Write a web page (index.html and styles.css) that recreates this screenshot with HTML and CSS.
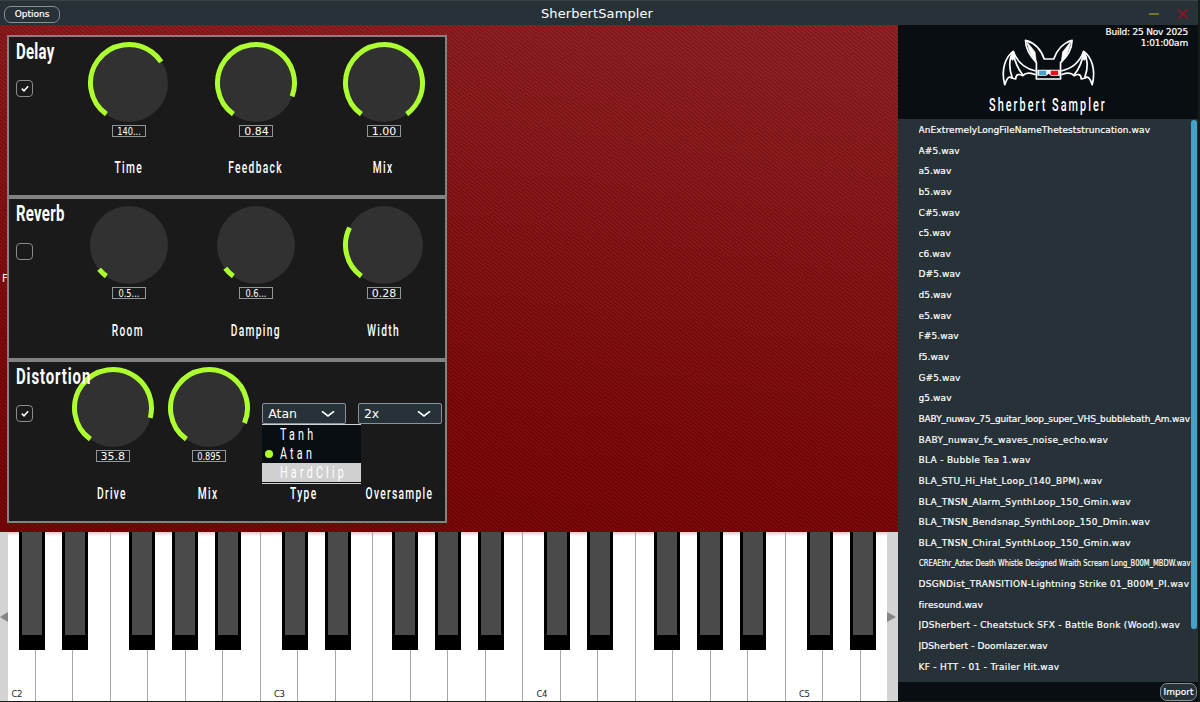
FILE: index.html
```html
<!DOCTYPE html>
<html lang="en">

<head>
    <meta charset="UTF-8">
    <meta name="viewport" content="width=device-width, initial-scale=1.0">
    <title>SherbertSampler</title>
    <link rel="stylesheet" href="styles.css">
</head>

<body>
    <div class="window">
        <header class="titlebar">
            <button class="btn options">Options</button>
            <h1>SherbertSampler</h1>
            <svg class="window-buttons" width="42" height="14" viewBox="0 0 42 14">
                <path d="M1 7h10" stroke="#a39023" stroke-width="1.4"/>
                <path d="M30 2l10 10M40 2l-10 10" stroke="#a80f20" stroke-width="1.4"/>
            </svg>
        </header>
        <div class="content">
            <main>
                <div class="stage">
                    <span class="hidden-label">F</span>
                    <div class="effects">
                        <section class="effect delay">
                            <div class="effect-head">
                                <h2>Delay</h2>
                                <span class="check on"><svg width="8" height="7" viewBox="0 0 8 7"><path d="M.8 3.6l2.2 2.2L7.2 1.2"/></svg></span>
                            </div>
                            <div class="control">
                                <svg class="knob" viewBox="-42 -42 84 84"><circle class="disc" r="39"/><circle class="arc" r="38.5" pathLength="360" stroke-dasharray="200.7 360"/></svg>
                                <span class="value"><i>140...</i></span>
                                <label>Time</label>
                            </div>
                            <div class="control">
                                <svg class="knob" viewBox="-42 -42 84 84"><circle class="disc" r="39"/><circle class="arc" r="38.5" pathLength="360" stroke-dasharray="254.3 360"/></svg>
                                <span class="value">0.84</span>
                                <label>Feedback</label>
                            </div>
                            <div class="control">
                                <svg class="knob" viewBox="-42 -42 84 84"><circle class="disc" r="39"/><circle class="arc" r="38.5" pathLength="360" stroke-dasharray="288 360"/></svg>
                                <span class="value">1.00</span>
                                <label>Mix</label>
                            </div>
                        </section>
                        <section class="effect reverb">
                            <div class="effect-head">
                                <h2>Reverb</h2>
                                <span class="check"></span>
                            </div>
                            <div class="control">
                                <svg class="knob" viewBox="-42 -42 84 84"><circle class="disc" r="39"/><circle class="arc" r="38.5" pathLength="360" stroke-dasharray="15 360"/></svg>
                                <span class="value"><i>0.5...</i></span>
                                <label>Room</label>
                            </div>
                            <div class="control">
                                <svg class="knob" viewBox="-42 -42 84 84"><circle class="disc" r="39"/><circle class="arc" r="38.5" pathLength="360" stroke-dasharray="17 360"/></svg>
                                <span class="value"><i>0.6...</i></span>
                                <label>Damping</label>
                            </div>
                            <div class="control">
                                <svg class="knob" viewBox="-42 -42 84 84"><circle class="disc" r="39"/><circle class="arc" r="38.5" pathLength="360" stroke-dasharray="80.6 360"/></svg>
                                <span class="value">0.28</span>
                                <label>Width</label>
                            </div>
                        </section>
                        <section class="effect distortion">
                            <div class="effect-head">
                                <h2>Distortion</h2>
                                <span class="check on"><svg width="8" height="7" viewBox="0 0 8 7"><path d="M.8 3.6l2.2 2.2L7.2 1.2"/></svg></span>
                            </div>
                            <div class="control">
                                <svg class="knob" viewBox="-42 -42 84 84"><circle class="disc" r="39"/><circle class="arc" r="38.5" pathLength="360" stroke-dasharray="249 360"/></svg>
                                <span class="value">35.8</span>
                                <label>Drive</label>
                            </div>
                            <div class="control">
                                <svg class="knob" viewBox="-42 -42 84 84"><circle class="disc" r="39"/><circle class="arc" r="38.5" pathLength="360" stroke-dasharray="257 360"/></svg>
                                <span class="value"><i>0.895</i></span>
                                <label>Mix</label>
                            </div>
                            <div class="control">
                                <div class="combo">
                                    <span>Atan</span>
                                    <svg width="14" height="8" viewBox="0 0 14 8"><path d="M1 1.3l6 4.7 6-4.7"/></svg>
                                    <ul class="menu">
                                        <li><span>Tanh</span></li>
                                        <li class="selected"><span>Atan</span></li>
                                        <li class="hover"><span>HardClip</span></li>
                                    </ul>
                                </div>
                                <label>Type</label>
                            </div>
                            <div class="control">
                                <div class="combo">
                                    <span>2x</span>
                                    <svg width="14" height="8" viewBox="0 0 14 8"><path d="M1 1.3l6 4.7 6-4.7"/></svg>
                                </div>
                                <label>Oversample</label>
                            </div>
                        </section>
                    </div>
                </div>
                <div class="keyboard">
                    <div class="scroll left"><svg width="8" height="10" viewBox="0 0 8 10"><path d="M8 0v10L0 5z"/></svg></div>
                    <div class="keys" id="keys"></div>
                    <div class="scroll right"><svg width="9" height="10" viewBox="0 0 9 10"><path d="M0 0v10l9-5z"/></svg></div>
                </div>
            </main>
            <aside>
                <div class="brand">
                    <p class="build">Build: 25 Nov 2025<br>1:01:00am</p>
                    <svg class="bat" width="102" height="65" viewBox="0 0 300 195" preserveAspectRatio="none">
                        <g fill="none" stroke="#fff" stroke-width="5" stroke-linejoin="round">
                            <path d="M110 147V98C91 78 78 54 78 31C104 38 124 60 133 87H161C170 60 190 38 215 31C214 56 202 80 181 98V147Z"/>
                            <path d="M82 35C88 65 98 82 110 98L106 66Z" fill="#fff" stroke-width="2"/>
                            <path d="M211 35C205 65 195 82 183 98L187 66Z" fill="#fff" stroke-width="2"/>
                            <path d="M108 123C76 116 54 98 42 64C19 80 5 120 17 164C22 148 29 136 37 144L49 147C50 130 60 132 70 137C81 125 95 130 108 134"/>
                            <path d="M42 64C29 87 29 115 39 143M42 64C45 91 55 117 72 137"/>
                            <path d="M42 64L32 84L40 92L48 84Z" fill="#fff" stroke="none"/>
                            <path d="M183 123C215 116 237 98 249 64C272 80 286 120 274 164C269 148 262 136 254 144L242 147C241 130 231 132 221 137C210 125 196 130 183 134"/>
                            <path d="M249 64C262 87 262 115 252 143M249 64C246 91 236 117 219 137"/>
                            <path d="M249 64L259 84L251 92L243 84Z" fill="#fff" stroke="none"/>
                        </g>
                        <path d="M113 119H179V137H153L146 131L139 137H113Z" fill="#fff"/>
                        <path d="M118 122H139V135H118Z" fill="#43a5cf"/>
                        <path d="M152 122H174V135H152Z" fill="#d9141d"/>
                    </svg>
                    <p class="brand-name">Sherbert Sampler</p>
                </div>
                <div class="browser">
                    <ul class="files">
                        <li>AnExtremelyLongFileNameTheteststruncation.wav</li>
                        <li>A#5.wav</li>
                        <li>a5.wav</li>
                        <li>b5.wav</li>
                        <li>C#5.wav</li>
                        <li>c5.wav</li>
                        <li>c6.wav</li>
                        <li>D#5.wav</li>
                        <li>d5.wav</li>
                        <li>e5.wav</li>
                        <li>F#5.wav</li>
                        <li>f5.wav</li>
                        <li>G#5.wav</li>
                        <li>g5.wav</li>
                        <li class="fitted">BABY_nuwav_75_guitar_loop_super_VHS_bubblebath_Am.wav</li>
                        <li class="wide">BABY_nuwav_fx_waves_noise_echo.wav</li>
                        <li class="wide">BLA - Bubble Tea 1.wav</li>
                        <li class="wide">BLA_STU_Hi_Hat_Loop_(140_BPM).wav</li>
                        <li class="wide">BLA_TNSN_Alarm_SynthLoop_150_Gmin.wav</li>
                        <li class="wide">BLA_TNSN_Bendsnap_SynthLoop_150_Dmin.wav</li>
                        <li class="wide">BLA_TNSN_Chiral_SynthLoop_150_Gmin.wav</li>
                        <li class="squeezed">CREAEthr_Aztec Death Whistle Designed Wraith Scream Long_B00M_MBDW.wav</li>
                        <li class="wide">DSGNDist_TRANSITION-Lightning Strike 01_B00M_PI.wav</li>
                        <li>firesound.wav</li>
                        <li class="wide">JDSherbert - Cheatstuck SFX - Battle Bonk (Wood).wav</li>
                        <li>JDSherbert - Doomlazer.wav</li>
                        <li class="wide">KF - HTT - 01 - Trailer Hit.wav</li>
                    </ul>
                    <div class="scrollbar"></div>
                </div>
                <footer>
                    <button class="btn import">Import</button>
                </footer>
            </aside>
        </div>
    </div>
    <script>
        // white keys; the ones with a sharp carry the black key
        var notes = ['C', 'D', 'E', 'F', 'G', 'A', 'B'];
        var sharps = ['C', 'D', 'F', 'G', 'A'];
        var keys = document.getElementById('keys');

        for (var i = 0; i < 24; i++)
        {
            var note = notes[i % 7];
            var key = document.createElement('div');
            key.className = 'key';
            if (note === 'C')
            {
                key.innerHTML = '<span>C' + (2 + Math.floor(i / 7)) + '</span>';
            }
            if (sharps.includes(note))
            {
                var black = document.createElement('div');
                black.className = 'black ' + note.toLowerCase() + '-sharp';
                key.appendChild(black);
            }
            keys.appendChild(key);
        }
    </script>
</body>
</html>
```
FILE: styles.css
```css
* {
    box-sizing: border-box;
}

body {
    font-family: "DejaVu Sans", Verdana, sans-serif;
    margin: 0;
    background-color: #171b16;
    color: #fff;
    overflow: hidden;
}

h1, h2, p, ul {
    margin: 0;
    padding: 0;
    font-weight: normal;
}

ul {
    list-style: none;
}

.window {
    width: 1198px;
    height: 701px;
    display: flex;
    flex-direction: column;
}

.titlebar {
    height: 25px;
    flex: none;
    display: grid;
    grid-template-columns: 1fr auto 1fr;
    align-items: center;
    padding: 2px 8px 0 4px;
    background-color: #263238;
    border-top: 1px solid #3b4243;
}

.titlebar h1 {
    font-size: 13px;
    line-height: 20px;
    letter-spacing: 0.1px;
}

.btn {
    font-family: inherit;
    font-size: 9px;
    padding: 0;
    color: #fff;
    background-color: #263238;
    border: 1px solid #859095;
    border-radius: 7px;
    -webkit-text-stroke: 0.2px #fff;
}

.options {
    width: 56px;
    height: 17px;
}

.window-buttons {
    justify-self: end;
    fill: none;
}

.content {
    flex: 1;
    display: flex;
    min-height: 0;
}

main {
    width: 898px;
    display: flex;
    flex-direction: column;
}

.stage {
    position: relative;
    height: 507px;
    padding: 10px 7px;
    background: repeating-linear-gradient(40deg, rgba(0, 0, 0, 0.15) 0, rgba(0, 0, 0, 0.15) 1.3px, rgba(255, 255, 255, 0.02) 1.7px, rgba(255, 255, 255, 0.02) 3px),
        linear-gradient(8deg, #780204 0%, #7f0709 30%, #8c1719 75%, #922022 100%);
}

.hidden-label {
    position: absolute;
    left: 2px;
    top: 248px;
    font-size: 10px;
}

.effects {
    position: relative;
    width: 440px;
}

.effect {
    display: flex;
    height: 163px;
    background-color: #1a1a1a;
    border: 2px solid #828282;
}

.effect.delay {
    height: 162px;
}

.effect-head {
    width: 56px;
    flex: none;
    padding: 1px 0 0 7px;
}

.effect h2 {
    font-family: Roboto, sans-serif;
    font-weight: bold;
    font-size: 22px;
    line-height: 28px;
    letter-spacing: 0.4px;
    white-space: nowrap;
    transform: scaleX(0.68);
    transform-origin: left;
}

.effect.distortion h2 {
    letter-spacing: 1.3px;
}

.check {
    display: flex;
    align-items: center;
    justify-content: center;
    width: 17px;
    height: 17px;
    margin-top: 14px;
    border: 1px solid #8b8b8b;
    border-radius: 4px;
}

.reverb .check {
    margin-top: 15px;
}

.check path {
    fill: none;
    stroke: #fff;
    stroke-width: 1.5;
}

.control {
    flex: none;
    width: 127.6px;
    display: flex;
    flex-direction: column;
    align-items: center;
    padding-top: 3.5px;
}

.reverb .control {
    padding-top: 4px;
}

.distortion .control {
    width: 95.7px;
}

.knob {
    width: 84px;
    height: 84px;
    flex: none;
}

.disc {
    fill: #313131;
}

.arc {
    fill: none;
    stroke: #adff2f;
    stroke-width: 5;
    transform: rotate(126deg);
}

.value {
    width: 34px;
    height: 12px;
    flex: none;
    border: 1px solid #8e979b;
    font-size: 11px;
    line-height: 11px;
    text-align: center;
}

.value i {
    display: block;
    font-style: normal;
    margin: 0 -8px;
    transform: scaleX(0.75);
}

.control label {
    font-family: Roboto, sans-serif;
    font-weight: 500;
    font-size: 17px;
    line-height: 20px;
    letter-spacing: 2.2px;
    margin-right: 1px;
    margin-top: 20px;
    transform: scaleX(0.6);
}

.reverb .control label,
.distortion .control label {
    margin-top: 21px;
}

.combo {
    position: relative;
    display: flex;
    align-items: center;
    justify-content: space-between;
    width: 84px;
    height: 21px;
    flex: none;
    margin-top: 37.5px;
    padding: 0 10px 0 5px;
    background-color: #263238;
    border: 1px solid #87939a;
    border-radius: 2px;
    font-size: 12.5px;
}

.combo path {
    fill: none;
    stroke: #fff;
    stroke-width: 1.7;
}

.distortion .combo + label {
    margin-top: 58.5px;
}

.menu {
    position: absolute;
    z-index: 2;
    left: -1px;
    top: 20px;
    width: 99px;
    height: 60px;
    background-color: #090e12;
    border-top: 1px solid #cfd3d5;
    border-bottom: 1px solid #cfd3d5;
    font-family: Roboto, sans-serif;
    font-size: 16px;
    letter-spacing: 4.8px;
}

.menu li {
    position: relative;
    height: 19px;
    line-height: 20px;
    padding-left: 18px;
}

.menu li span {
    display: block;
    width: 80px;
    white-space: nowrap;
    transform: scaleX(0.67);
    transform-origin: left;
}

.menu .selected::before {
    content: "";
    position: absolute;
    left: 3px;
    top: 6px;
    width: 8px;
    height: 8px;
    border-radius: 50%;
    background-color: #adff2f;
}

.menu .hover {
    background-color: #d0d0d0;
}

.keyboard {
    display: flex;
    height: 169px;
    background-color: #fff;
}

.scroll {
    display: flex;
    align-items: center;
    background-color: #d3d3d3;
    fill: #868686;
}

.scroll.left {
    width: 8px;
}

.scroll.right {
    width: 11px;
}

.keys {
    flex: 1;
    display: flex;
    overflow: hidden;
    background: linear-gradient(#e6c8c8, #fff 4px);
}

.key {
    position: relative;
    flex: none;
    width: 37.5px;
    border-right: 1px solid #a6a6a6;
    display: flex;
    align-items: flex-end;
    padding: 0 0 2px 13.5px;
    color: #222;
    font-size: 8.5px;
    letter-spacing: -0.4px;
}

.key:first-child {
    margin-left: -10px;
}

.black {
    position: absolute;
    z-index: 1;
    top: 0;
    width: 26px;
    height: 118px;
    background-color: #4a4a4a;
    border: solid #000;
    border-width: 0 3px 15px;
}

.c-sharp {
    left: 21px;
}

.d-sharp {
    left: 26.5px;
}

.f-sharp {
    left: 18.5px;
}

.g-sharp {
    left: 24px;
}

.a-sharp {
    left: 29.5px;
}

aside {
    width: 300px;
    display: flex;
    flex-direction: column;
    background-color: #090e12;
}

.brand {
    position: relative;
    height: 94px;
    display: flex;
    flex-direction: column;
    align-items: center;
    padding-top: 5px;
}

.build {
    position: absolute;
    right: 10px;
    top: 2px;
    font-size: 9px;
    line-height: 11px;
    letter-spacing: -0.2px;
    text-align: right;
    -webkit-text-stroke: 0.2px #fff;
}

.bat {
    flex: none;
    margin-left: 4px;
}

.brand-name {
    font-family: Roboto, sans-serif;
    font-weight: 500;
    font-size: 17.5px;
    line-height: 20px;
    letter-spacing: 3.3px;
    white-space: nowrap;
    transform: scaleX(0.62);
}

.browser {
    height: 563px;
    display: flex;
    background-color: #263238;
    padding: 1px 1px 0 20.5px;
}

.files {
    flex: 1;
    min-width: 0;
    overflow: hidden;
    font-size: 9px;
    letter-spacing: 0.1px;
    -webkit-text-stroke: 0.2px #fff;
}

.files li {
    height: 20.65px;
    line-height: 20.65px;
    white-space: nowrap;
}

.files .wide {
    letter-spacing: 0.31px;
}

.files .fitted {
    letter-spacing: -0.12px;
}

.files .squeezed {
    width: 362px;
    letter-spacing: 0;
    transform: scaleX(0.75);
    transform-origin: left;
}

.scrollbar {
    width: 6px;
    height: 509px;
    border-radius: 3px;
    background-color: #42a2c8;
}

footer {
    flex: 1;
    display: flex;
    justify-content: flex-end;
    padding-right: 1px;
}

.import {
    width: 37px;
    height: 18px;
    margin-top: 1px;
}
```
